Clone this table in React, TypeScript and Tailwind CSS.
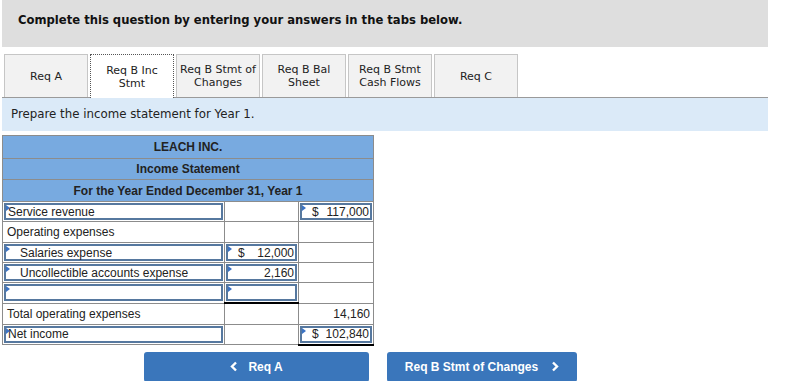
import React from "react";

const verdana = { fontFamily: '"DejaVu Sans", Verdana, sans-serif' };
const arial = { fontFamily: '"Liberation Sans", Arial, sans-serif' };

const tabs = [
  ["Req A"],
  ["Req B Inc", "Stmt"],
  ["Req B Stmt of", "Changes"],
  ["Req B Bal", "Sheet"],
  ["Req B Stmt", "Cash Flows"],
  ["Req C"],
];

function Flag() {
  return (
    <span className="absolute left-0 top-0 w-0 h-0 border-t-[3px] border-b-[3px] border-l-[4px] border-t-transparent border-b-transparent border-l-[#3b73c4]" />
  );
}

function Field({
  children,
  className = "",
}: {
  children?: React.ReactNode;
  className?: string;
}) {
  return (
    <div
      className={`relative h-[17px] border-2 border-[#56789f] bg-white flex items-center ${className}`}
    >
      <Flag />
      {children}
    </div>
  );
}

function Money({ sign, value }: { sign?: boolean; value: string }) {
  return (
    <div className="flex w-full items-center justify-between pl-[10px] pr-[1px]">
      <span>{sign ? "$" : ""}</span>
      <span>{value}</span>
    </div>
  );
}

function Chevron({ dir }: { dir: "left" | "right" }) {
  return (
    <svg width="8" height="11" viewBox="0 0 8 11" className="inline-block">
      <polyline
        points={dir === "left" ? "6,1.5 2,5.5 6,9.5" : "2,1.5 6,5.5 2,9.5"}
        fill="none"
        stroke="white"
        strokeWidth="2.4"
      />
    </svg>
  );
}

export default function App() {
  const td = "border border-[#8c8c8c] p-[1px] h-[20px] align-middle";
  return (
    <div className="w-[789px] h-[381px] bg-white overflow-hidden text-[#222]">
      <div
        className="ml-[2px] w-[766px] h-[47px] bg-[#dedede] pl-[16px] pt-[12px] text-[11.6px] font-bold text-[#111]"
        style={verdana}
      >
        Complete this question by entering your answers in the tabs below.
      </div>

      <div className="ml-[2px] w-[766px] mt-[7px] border-b border-[#9a9a9a] flex gap-[2px] pl-[2px]" style={verdana}>
        {tabs.map((t, i) => {
          const active = i === 1;
          return (
            <div
              key={i}
              className={
                "w-[84px] h-[43px] flex flex-col items-center justify-center text-[11px] leading-[13px] text-[#222] " +
                (active
                  ? "bg-white border border-dotted border-[#555] border-b-0 -mb-px h-[44px]"
                  : "bg-[#f2f2f2] border border-[#c6c6c6] border-b-0")
              }
            >
              {t.map((l) => (
                <span key={l}>{l}</span>
              ))}
            </div>
          );
        })}
      </div>

      <div
        className="ml-[2px] w-[766px] h-[33px] bg-[#dbeaf8] pl-[9px] flex items-center text-[11.8px] text-[#222]"
        style={verdana}
      >
        Prepare the income statement for Year 1.
      </div>

      <table
        className="ml-[2px] mt-[4px] border-collapse text-[12px] text-[#222]"
        style={arial}
      >
        <colgroup>
          <col className="w-[222px]" />
          <col className="w-[74px]" />
          <col className="w-[75px]" />
        </colgroup>
        <tbody>
          <tr>
            <td colSpan={3} className="border border-[#8c8c8c] bg-[#78aae0] h-[23px] text-center font-bold">
              LEACH INC.
            </td>
          </tr>
          <tr>
            <td colSpan={3} className="border border-[#8c8c8c] bg-[#78aae0] h-[21px] text-center font-bold">
              Income Statement
            </td>
          </tr>
          <tr>
            <td colSpan={3} className="border border-[#8c8c8c] bg-[#78aae0] h-[22px] text-center font-bold">
              For the Year Ended December 31, Year 1
            </td>
          </tr>
          <tr>
            <td className={td}>
              <Field className="pl-[2px]">Service revenue</Field>
            </td>
            <td className={td}></td>
            <td className={td}>
              <Field>
                <Money sign value="117,000" />
              </Field>
            </td>
          </tr>
          <tr>
            <td className={td + " pl-[4px]"}>Operating expenses</td>
            <td className={td}></td>
            <td className={td}></td>
          </tr>
          <tr>
            <td className={td}>
              <Field className="pl-[14px]">Salaries expense</Field>
            </td>
            <td className={td}>
              <Field>
                <Money sign value="12,000" />
              </Field>
            </td>
            <td className={td}></td>
          </tr>
          <tr>
            <td className={td}>
              <Field className="pl-[14px]">Uncollectible accounts expense</Field>
            </td>
            <td className={td}>
              <Field>
                <Money value="2,160" />
              </Field>
            </td>
            <td className={td}></td>
          </tr>
          <tr>
            <td className={td}>
              <Field />
            </td>
            <td className={td + " border-b-2 border-b-black"}>
              <Field />
            </td>
            <td className={td}></td>
          </tr>
          <tr>
            <td className={td + " pl-[4px]"}>Total operating expenses</td>
            <td className={td}></td>
            <td className={td + " text-right pr-[3px]"}>14,160</td>
          </tr>
          <tr>
            <td className={td}>
              <Field className="pl-[2px]">Net income</Field>
            </td>
            <td className={td}></td>
            <td className={td + " border-b-2 border-b-black"}>
              <Field>
                <Money sign value="102,840" />
              </Field>
            </td>
          </tr>
        </tbody>
      </table>

      <div className="flex mt-[6px] ml-[144px] gap-[18px] text-white font-bold text-[12px]" style={arial}>
        <div className="w-[225px] h-[30px] bg-[#3a76bb] rounded-[3px] flex items-center justify-center gap-[10px]">
          <Chevron dir="left" />
          <span>Req A</span>
        </div>
        <div className="w-[190px] h-[30px] bg-[#3a76bb] rounded-[3px] flex items-center justify-center gap-[13px]">
          <span>Req B Stmt of Changes</span>
          <Chevron dir="right" />
        </div>
      </div>
    </div>
  );
}
